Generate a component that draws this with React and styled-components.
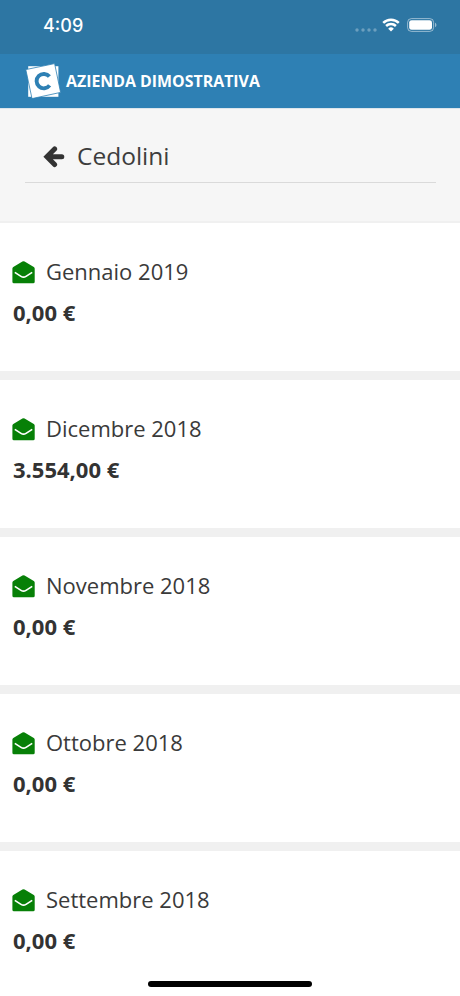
import styled, { createGlobalStyle } from "styled-components";

const payslips = [
  { month: "Gennaio 2019", amount: "0,00 €" },
  { month: "Dicembre 2018", amount: "3.554,00 €" },
  { month: "Novembre 2018", amount: "0,00 €" },
  { month: "Ottobre 2018", amount: "0,00 €" },
  { month: "Settembre 2018", amount: "0,00 €" },
];

export default function App() {
  return (
    <>
      <GlobalStyle />
      <Screen>
        <StatusBar />
        <Header>
          <Logo />
          <span>AZIENDA DIMOSTRATIVA</span>
        </Header>
        <PageHead>
          <div className="title">
            <BackArrow />
            <h1>Cedolini</h1>
          </div>
        </PageHead>
        <List>
          {payslips.map((item) => (
            <Card key={item.month}>
              <div className="month">
                <MailOpen />
                <span>{item.month}</span>
              </div>
              <strong>{item.amount}</strong>
            </Card>
          ))}
        </List>
        <HomeIndicator />
      </Screen>
    </>
  );
}

function StatusBar() {
  return (
    <StatusBarStyled>
      <time>4:09</time>
      <div className="icons">
        <svg className="dots" width="22" height="4" viewBox="0 0 22 4">
          <circle cx="2" cy="2" r="1.7" />
          <circle cx="8" cy="2" r="1.7" />
          <circle cx="14" cy="2" r="1.7" />
          <circle cx="20" cy="2" r="1.7" />
        </svg>
        <svg className="wifi" width="18" height="14" viewBox="0 0 18 14">
          <path d="M1.2 4.9a11.2 11.2 0 0 1 15.6 0" />
          <path d="M4.1 8a7 7 0 0 1 9.8 0" />
          <path className="base" d="M9 13.4L6.2 10.7a4 4 0 0 1 5.6 0z" />
        </svg>
        <svg className="battery" width="30" height="14" viewBox="0 0 30 14">
          <rect className="shell" x="0.6" y="0.6" width="26" height="12.8" rx="3.8" />
          <rect x="2.2" y="2.2" width="22.8" height="9.6" rx="2.4" />
          <path className="tip" d="M28 4.8c1.9.7 1.9 3.7 0 4.4z" />
        </svg>
      </div>
    </StatusBarStyled>
  );
}

function Logo() {
  return (
    <svg width="36" height="36" viewBox="0 0 36 36">
      <path d="M3.2 3.2H33.4V33.8H3.2z" fill="#fff" />
      <path
        d="M.8 6.6L29.6.6L35.6 29.4L7 35.6z"
        fill="#fff"
        stroke="#2e80b4"
        strokeWidth="0.8"
      />
      <path
        d="M24.4 13.6A7.2 7.2 0 1 0 24.6 22.4"
        fill="none"
        stroke="#2e80b4"
        strokeWidth="3.9"
      />
    </svg>
  );
}

function BackArrow() {
  return (
    <svg width="22" height="22" viewBox="0 0 22 22">
      <path
        d="M11.6 2.9L3.9 10.7L11.6 18.5M5 10.7H18.8"
        fill="none"
        stroke="#333"
        strokeWidth="5"
        strokeLinecap="round"
        strokeLinejoin="miter"
      />
    </svg>
  );
}

function MailOpen() {
  return (
    <svg width="23" height="23" viewBox="0 0 23 23">
      <path
        d="M10.4.5Q11.5-.2 12.6.5L21.8 6Q22.7 6.5 22.7 7.5V20.7Q22.7 22.2 21.2 22.2H1.9Q.4 22.2.4 20.7V7.5Q.4 6.5 1.3 6z"
        fill="#078007"
      />
      <path
        d="M2.8 11.4L9 15.4Q11.5 17 14 15.4L20.2 11.4"
        fill="none"
        stroke="#fff"
        strokeWidth="1.7"
      />
    </svg>
  );
}

const GlobalStyle = createGlobalStyle`
  * {
    box-sizing: border-box;
  }
  body {
    margin: 0;
    background-color: #fff;
    color: #333;
    font-family: "Open Sans", sans-serif;
  }
`;

const Screen = styled.div`
  position: relative;
  width: 100%;
  height: 996px;
  overflow: hidden;
  background-color: #f0f0f0;
`;

const StatusBarStyled = styled.div`
  display: flex;
  justify-content: space-between;
  height: 54px;
  padding: 14px 23px 0 43px;
  background-color: #2d76a3;
  color: #fff;
  time {
    font-family: Inter, sans-serif;
    font-size: 18px;
    font-weight: 500;
    line-height: 23px;
  }
  .icons {
    display: flex;
    height: 21px;
    align-items: center;
  }
  svg {
    fill: #fff;
  }
  .dots {
    margin: 10px 5px 0 0;
    opacity: 0.3;
  }
  .wifi {
    margin-right: 7px;
    path {
      fill: none;
      stroke: #fff;
      stroke-width: 2.5;
    }
    .base {
      fill: #fff;
      stroke: none;
    }
  }
  .shell {
    fill: none;
    stroke: #fff;
    stroke-opacity: 0.5;
  }
  .tip {
    fill-opacity: 0.5;
  }
`;

const Header = styled.header`
  display: flex;
  align-items: center;
  height: 54px;
  padding-left: 25px;
  background-color: #2e80b4;
  color: #fff;
  span {
    margin-left: 5px;
    font-size: 15.9px;
    font-weight: 700;
    line-height: 22px;
  }
`;

const PageHead = styled.section`
  height: 115px;
  padding: 22px 24px 0 25px;
  background-color: #f6f6f6;
  border-top: 1px solid #dce5eb;
  border-bottom: 2px solid #f0f0f0;
  .title {
    display: flex;
    align-items: center;
    height: 52px;
    padding-left: 18px;
    border-bottom: 1px solid #dadada;
  }
  h1 {
    margin: 0 0 2px 12px;
    color: #3d3d3d;
    font-size: 24.5px;
    font-weight: 400;
    line-height: 34px;
  }
`;

const List = styled.main`
  display: flex;
  flex-direction: column;
  gap: 9px;
`;

const Card = styled.article`
  height: 148px;
  flex-shrink: 0;
  padding: 33px 12px 0;
  background-color: #fff;
  .month {
    display: flex;
    align-items: center;
    height: 32px;
    gap: 11px;
    color: #3a3a3a;
    font-size: 22px;
    span {
      line-height: 30px;
      margin-bottom: 2px;
    }
  }
  strong {
    display: block;
    margin: 9px 0 0 1px;
    font-size: 22px;
    font-weight: 700;
    line-height: 30px;
  }
`;

const HomeIndicator = styled.div`
  position: absolute;
  bottom: 9px;
  left: 148px;
  width: 164px;
  height: 6px;
  border-radius: 3px;
  background-color: #000;
`;
